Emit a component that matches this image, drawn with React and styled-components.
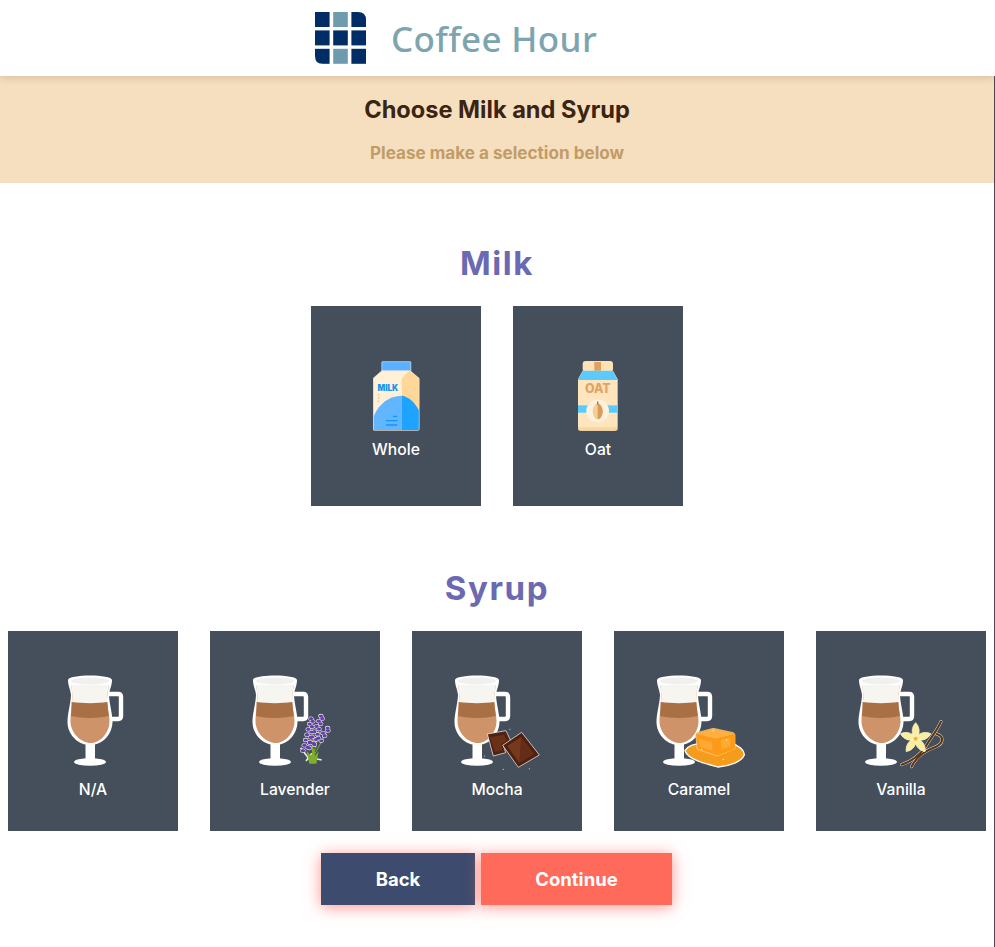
import React from 'react'
import styled, { createGlobalStyle } from 'styled-components'

const GlobalStyle = createGlobalStyle`
  html, body {
    margin: 0;
    padding: 0;
    background: #fff;
    font-family: Inter, "Liberation Sans", sans-serif;
  }
  * {
    box-sizing: border-box;
  }
`

const Header = styled.header`
  position: relative;
  z-index: 2;
  height: 76px;
  background: #fff;
  display: flex;
  align-items: center;
  gap: 25px;
  padding-left: 315px;
  box-shadow: 0 1px 8px rgba(120, 80, 30, 0.25);
`

const Title = styled.h1`
  margin: 0;
  font-family: "Noto Sans", "Open Sans", sans-serif;
  font-size: 35px;
  font-weight: 500;
  letter-spacing: 0.35px;
  color: #7da5b1;
`

const Page = styled.div`
  width: 995px;
  min-height: 871px;
  border-right: 1px solid #3c4b5e;
`

const Banner = styled.section`
  height: 107px;
  background: #f5dfbf;
  text-align: center;
  padding-top: 19px;
`

const BannerTitle = styled.h2`
  margin: 0;
  font-size: 23.6px;
  line-height: 29px;
  font-weight: 700;
  color: #3b2412;
`

const BannerText = styled.p`
  margin: 19px 0 0;
  font-size: 17.1px;
  line-height: 20px;
  font-weight: 700;
  color: #c29c68;
`

const Content = styled.main`
  padding-top: 59px;
  display: flex;
  flex-direction: column;
  align-items: center;
`

const SectionTitle = styled.h3`
  margin: ${props => props.$top || 0}px 0 21px;
  font-size: 33px;
  line-height: 43px;
  font-weight: 700;
  letter-spacing: 1.6px;
  color: #6b69b2;
`

const CardRow = styled.div`
  display: flex;
  justify-content: center;
  gap: 32px;
`

const Card = styled.button`
  width: 170px;
  height: 200px;
  padding: ${props => props.$shift || 0}px 0 0;
  border: 0;
  background: #454f5b;
  color: #fff;
  display: flex;
  flex-direction: column;
  align-items: center;
  justify-content: center;
  font-family: inherit;
`

const CardImage = styled.div`
  width: 170px;
  height: ${props => props.$height}px;
  display: flex;
  align-items: center;
  justify-content: center;
`

const CardLabel = styled.span`
  margin-top: 1px;
  font-size: 15.7px;
  line-height: 22px;
  font-weight: 500;
`

const Buttons = styled.div`
  margin-top: 22px;
  padding-right: 1px;
  display: flex;
  justify-content: center;
  gap: 6px;
`

const ActionButton = styled.button`
  width: ${props => props.$width}px;
  height: 52px;
  border: 0;
  padding: 0;
  background: ${props => props.$color};
  color: #fff;
  font-family: inherit;
  font-size: 18.5px;
  font-weight: 700;
  box-shadow: 0 2px 14px rgba(255, 100, 90, 0.7);
`

function Logo() {
  const cells = [0, 1, 2, 3, 4, 5, 6, 7, 8]
  return (
    <svg width="51" height="52" viewBox="0 0 51 52">
      <defs>
        <clipPath id="logoClip">
          <path d="M0 0H43Q51 0 51 8V52H8Q0 52 0 44Z" />
        </clipPath>
      </defs>
      <g clipPath="url(#logoClip)">
        {cells.map(i => (
          <rect
            key={i}
            x={(i % 3) * 18.2}
            y={Math.floor(i / 3) * 18.4}
            width="14.6"
            height="15"
            fill={i === 1 || i === 7 ? '#6e9bae' : '#002d66'}
          />
        ))}
      </g>
    </svg>
  )
}

function MilkCarton() {
  return (
    <svg width="47" height="70" viewBox="97 63 140 210">
      <rect x="123" y="65" width="87" height="29" rx="2" fill="#5bb1ff" stroke="#dfe8ef" strokeWidth="2" />
      <path d="M123 92H208L235 115V268Q235 271 232 271H100Q97 271 97 268V115Z" fill="#fff0d8" stroke="#dcdcd6" strokeWidth="2" />
      <path d="M205 92L234 115V270H183V115Z" fill="#ffd899" />
      <path d="M99 270V228C115 190 145 168 183 167V270Z" fill="#62b5ff" />
      <path d="M183 167C205 170 222 188 234 210V270H183Z" fill="#1ea4ff" />
      <text x="110" y="152" fontFamily="Inter, sans-serif" fontSize="26" fontWeight="900" fill="#1595ee" textLength="62" lengthAdjust="spacingAndGlyphs">MILK</text>
      <rect x="111" y="162" width="5" height="4" fill="#f1c27a" />
      <rect x="111" y="172" width="5" height="4" fill="#f1c27a" />
      <rect x="111" y="182" width="5" height="4" fill="#f1c27a" />
      <rect x="156" y="227" width="14" height="4" rx="2" fill="#1595ee" />
      <rect x="135" y="240" width="35" height="4" rx="2" fill="#1595ee" />
      <rect x="135" y="253" width="35" height="4" rx="2" fill="#1595ee" />
    </svg>
  )
}

function OatCarton() {
  return (
    <svg width="40" height="70" viewBox="713 63 120 210">
      <rect x="727" y="63" width="91" height="32" rx="9" fill="#ffe2b4" />
      <rect x="762" y="66" width="20" height="28" fill="#e0a15c" />
      <path d="M727 92H818L832 118V260Q832 272 820 272H725Q713 272 713 260V118Z" fill="#ffe5bd" />
      <path d="M727 92H818L832 120H713Z" fill="#5bcbff" />
      <rect x="713" y="196" width="119" height="22" fill="#5bcbff" />
      <rect x="713" y="262" width="119" height="10" rx="6" fill="#f7d6a2" />
      <text x="734" y="160" fontFamily="Inter, sans-serif" fontSize="38" fontWeight="800" fill="#e3a25f" textLength="77" lengthAdjust="spacingAndGlyphs">OAT</text>
      <circle cx="772" cy="213" r="34" fill="#fdf2de" />
      <ellipse cx="772" cy="214" rx="15" ry="24" fill="#f3cf97" />
      <path d="M772 190C785 195 787 208 787 214C787 228 780 238 772 238Z" fill="#d99b58" />
      <rect x="770" y="184" width="4" height="10" fill="#b07a40" />
    </svg>
  )
}

// the glass, drawn from its rim's top-left corner
function Mug({ x }) {
  const inner = 'M3 10C4 16 5 20 4 27C3.5 34 2.5 40 2.5 46C2.5 58 13 68 23 68C32 68 41.5 58 41.5 46C41.5 40 39.5 33 39 27C39 20 40 15 41 10Z'
  return (
    <g transform={`translate(${x} 13)`}>
      <path d="M37 19H50Q53 19 53 22V41Q53 44 50 44H38" fill="none" stroke="#fff" strokeWidth="4.4" />
      <path d="M0 5C0 -1 44 -1 44 5C44 11 41.5 14 41 20C41.5 30 44.5 38 44.5 47C44.5 59 35 68 27 69.5V84H17.5V69.5C9 68 -0.5 59 -0.5 47C-0.5 38 2.5 30 3 20C2.5 14 0 11 0 5Z" fill="#fff" />
      <ellipse cx="22" cy="87" rx="16" ry="3.8" fill="#fff" />
      <path d={inner} fill="#ce9368" />
      <path d="M3.6 27H39.4C39.6 31 40.3 37 40.8 41C30 43.5 14 43.5 3 41C3.5 37 3.7 31 3.6 27Z" fill="#a96f45" />
      <path d="M3 10C4 16 5 20 4 27C14 28.5 30 28.5 39 27C39 20 40 15 41 10Z" fill="#f7f5ef" />
      <ellipse cx="22" cy="6" rx="19" ry="3.6" fill="#f0f0ee" />
    </g>
  )
}

function Lavender() {
  // two long spikes and a short one, leaning right
  const spikes = [
    { from: [768, 272], to: [786, 176], n: 13 },
    { from: [782, 262], to: [816, 168], n: 13 },
    { from: [800, 250], to: [836, 204], n: 7 },
  ]
  const buds = []
  spikes.forEach(({ from, to, n }) => {
    for (let i = 0; i < n; i++) {
      const t = i / (n - 1)
      const spread = (i % 2 ? 1 : -1) * (9 - 6 * t)
      buds.push([from[0] + (to[0] - from[0]) * t + spread, from[1] + (to[1] - from[1]) * t])
    }
  })
  return (
    <g transform="translate(-160 -2) scale(0.3333)">
      <path d="M752 263L782 303M815 300L788 294M768 303L786 280" stroke="#e9efd9" strokeWidth="5" fill="none" />
      <path d="M778 311L770 272L784 288L790 262L795 288L806 274L799 311Z" fill="#7fae2e" />
      <path d="M788 290L786 180M790 290L815 172M793 285L834 208" stroke="#7fae2e" strokeWidth="3" fill="none" />
      {buds.map(([cx, cy], i) => (
        <ellipse key={i} cx={cx} cy={cy} rx="8" ry="6.5" fill="#f3eefa" />
      ))}
      {buds.map(([cx, cy], i) => (
        <ellipse key={i} cx={cx} cy={cy} rx="6.5" ry="4.8" fill="#6440ac" />
      ))}
    </g>
  )
}

function Chocolate() {
  return (
    <g transform="translate(28 -2) scale(0.3333)">
      <path d="M142 222L198 212L212 242L190 256L197 278L160 288Z" fill="#4f2313" stroke="#fff" strokeWidth="2" />
      <path d="M150 232L192 224L200 242L184 252L188 270L165 276Z" fill="#6b3018" />
      <path d="M188 256L245 217L298 285L235 322Z" fill="#4f2010" stroke="#fff" strokeWidth="2" />
      <path d="M202 258L243 231L282 282L238 308Z" fill="#76391e" />
      <path d="M243 231L282 282L238 308Z" fill="#652c17" />
      <circle cx="210" cy="208" r="1.5" fill="#fff" />
      <circle cx="190" cy="328" r="1.5" fill="#fff" />
      <circle cx="268" cy="326" r="1.5" fill="#fff" />
      <circle cx="133" cy="288" r="1.5" fill="#fff" />
    </g>
  )
}

function Caramel() {
  return (
    <g transform="translate(-174 -2) scale(0.3333)">
      <path d="M735 272C745 255 770 250 790 250H880C900 262 914 270 913 285C905 305 870 318 835 321C800 312 745 300 735 272Z" fill="#f69c1c" stroke="#fff" strokeWidth="4" />
      <path d="M767 224Q768 218 775 217L820 205L880 218Q885 220 885 226V266L832 288L772 268Z" fill="#fb9a1c" stroke="#ffd9a0" strokeWidth="2" />
      <path d="M768 222L820 206L884 222L830 236Z" fill="#ffb040" />
      <path d="M830 236L884 222V266L832 287Z" fill="#ff9a12" />
      <path d="M777 236L815 246L818 272L780 260Z" fill="#ffa933" />
      <path d="M842 240L872 232V258L844 270Z" fill="#ffab30" />
      <circle cx="785" cy="268" r="2" fill="#fff3d8" />
      <circle cx="860" cy="240" r="2" fill="#fff3d8" />
      <circle cx="820" cy="212" r="2" fill="#fff3d8" />
      <circle cx="850" cy="298" r="2" fill="#fff3d8" />
    </g>
  )
}

function Vanilla() {
  const petals = [0, 72, 144, 216, 288]
  const pods = [
    'M185 314C215 304 240 285 258 258C272 232 290 215 303 185',
    'M215 320C228 290 255 272 288 260C312 250 312 228 290 222',
  ]
  return (
    <g transform="translate(24 -2) scale(0.3333)">
      {pods.map(d => (
        <path key={d} d={d} fill="none" stroke="#e9e2d8" strokeWidth="9" strokeLinecap="round" />
      ))}
      {pods.map(d => (
        <path key={d} d={d} fill="none" stroke="#5c3416" strokeWidth="6.5" strokeLinecap="round" />
      ))}
      {petals.map(a => (
        <path
          key={a}
          d="M0 0C-15 -12 -13 -35 0 -48C13 -35 15 -12 0 0Z"
          fill="#fcee9f"
          stroke="#fff8d8"
          strokeWidth="2"
          transform={`translate(227 236) rotate(${a})`}
        />
      ))}
      <circle cx="227" cy="236" r="6" fill="#f2b632" />
    </g>
  )
}

const extras = {
  Lavender: <Lavender />,
  Mocha: <Chocolate />,
  Caramel: <Caramel />,
  Vanilla: <Vanilla />,
}

const syrups = ['N/A', 'Lavender', 'Mocha', 'Caramel', 'Vanilla']

function SyrupImage({ name }) {
  return (
    <svg width="170" height="116" viewBox="0 0 170 116">
      <Mug x={extras[name] ? 43 : 60} />
      {extras[name]}
    </svg>
  )
}

export default function App() {
  return (
    <>
      <GlobalStyle />
      <Header>
        <Logo />
        <Title>Coffee Hour</Title>
      </Header>
      <Page>
        <Banner>
          <BannerTitle>Choose Milk and Syrup</BannerTitle>
          <BannerText>Please make a selection below</BannerText>
        </Banner>
        <Content>
          <SectionTitle>Milk</SectionTitle>
          <CardRow>
            <Card $shift={3}>
              <CardImage $height={84}><MilkCarton /></CardImage>
              <CardLabel>Whole</CardLabel>
            </Card>
            <Card $shift={3}>
              <CardImage $height={84}><OatCarton /></CardImage>
              <CardLabel>Oat</CardLabel>
            </Card>
          </CardRow>
          <SectionTitle $top={61}>Syrup</SectionTitle>
          <CardRow>
            {syrups.map(name => (
              <Card key={name} $shift={1}>
                <CardImage $height={116}><SyrupImage name={name} /></CardImage>
                <CardLabel>{name}</CardLabel>
              </Card>
            ))}
          </CardRow>
          <Buttons>
            <ActionButton $width={154} $color="#3c4b6e">Back</ActionButton>
            <ActionButton $width={191} $color="#ff6a5a">Continue</ActionButton>
          </Buttons>
        </Content>
      </Page>
    </>
  )
}
